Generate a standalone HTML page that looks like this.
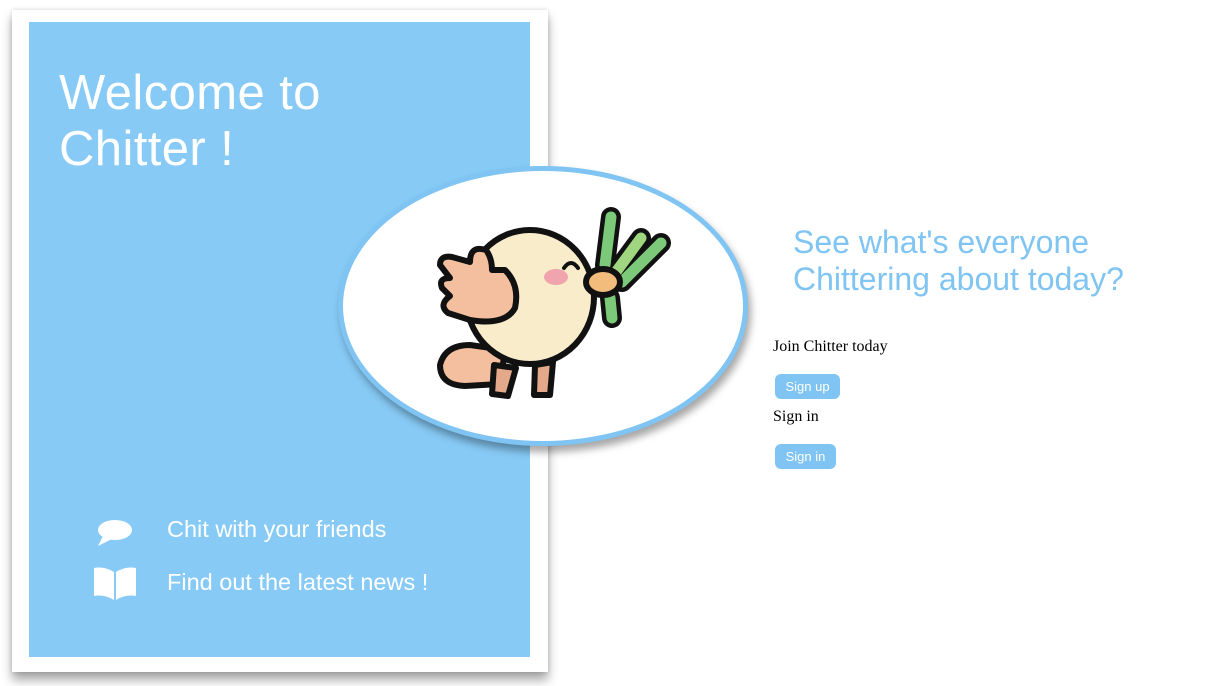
<!DOCTYPE html>
<html><head><style>
body{margin:0;width:1226px;height:686px;background:#fff;position:relative;overflow:hidden;font-family:"Liberation Serif",serif}
.frame{position:absolute;left:12px;top:10px;width:536px;height:662px;background:#fff;box-shadow:0 8px 10px rgba(0,0,0,.35),0 0 4px rgba(0,0,0,.15)}
.blue{position:absolute;left:29px;top:22px;width:501px;height:635px;background:#87caf6}
.h1{position:absolute;left:59px;top:65px;color:#fff;font:49px/56px "Liberation Sans",sans-serif;letter-spacing:.4px}
.feat{position:absolute;left:167px;color:#fff;font:23.5px "Liberation Sans",sans-serif}
.oval{position:absolute;left:338px;top:166px;width:400px;height:270px;border:5px solid #7fc4f2;border-radius:50%;background:#fff;box-shadow:3px 6px 8px rgba(0,0,0,.35)}
.tag{position:absolute;left:793px;top:224px;color:#7fc4f2;font:32px/37px "Liberation Sans",sans-serif}
.t{position:absolute;left:773px;font-size:16px;color:#000}
.btn{position:absolute;left:775px;height:25px;background:#7fc4f2;border-radius:6px;color:#fff;font:13px/25px "Liberation Sans",sans-serif;text-align:center}
</style></head><body>
<div class="frame"></div>
<div class="blue"></div>
<div class="h1">Welcome to<br>Chitter !</div>
<svg style="position:absolute;left:95px;top:518px" width="40" height="30" viewBox="0 0 40 30"><ellipse cx="20" cy="12" rx="17" ry="10" fill="#fff"/><path d="M8 18 L3 28 L17 21Z" fill="#fff"/></svg>
<div class="feat" style="top:516px">Chit with your friends</div>
<svg style="position:absolute;left:92px;top:566px" width="46" height="36" viewBox="0 0 46 36"><path d="M2 2 Q12 0 22 6 L22 34 Q12 28 2 30Z" fill="#fff"/><path d="M44 2 Q34 0 24 6 L24 34 Q34 28 44 30Z" fill="#fff"/></svg>
<div class="feat" style="top:569px">Find out the latest news !</div>
<div class="oval"></div>
<svg style="position:absolute;left:420px;top:200px" width="260" height="210" viewBox="420 200 260 210" stroke="#111" stroke-width="6" stroke-linejoin="round" stroke-linecap="round">
<path d="M470 345 Q445 345 440 365 Q440 385 465 386 L500 384 L505 350Z" fill="#f4bf9e"/>
<path d="M494 365 L492 394 L508 396 L516 368Z" fill="#e4a88a"/>
<path d="M535 365 L534 395 L550 395 L553 362Z" fill="#e4a88a"/>
<ellipse cx="530" cy="297" rx="64" ry="67" fill="#f8eccb"/>
<g stroke-width="20"><path d="M605 265 L611 217"/><path d="M616 272 L641 238"/><path d="M622 282 L661 243"/><path d="M610 298 L612 318"/></g>
<g stroke-width="11"><path d="M605 265 L611 217" stroke="#7cc97a"/><path d="M616 272 L641 238" stroke="#9fd67f"/><path d="M622 282 L661 243" stroke="#7cc97a"/><path d="M610 298 L612 318" stroke="#7cc97a"/></g>
<path d="M440 265 Q440 255 452 257 L470 262 Q470 245 486 250 Q492 258 492 270 L505 270 Q520 285 515 308 Q505 326 470 320 L448 313 Q438 305 450 296 L442 288 Q438 278 450 278Z" fill="#f4bf9e"/>
<ellipse cx="603" cy="282" rx="17" ry="13" fill="#f2bd7c"/>
<path d="M564 268 Q571 258 578 268" fill="none" stroke-width="4"/>
<ellipse cx="556" cy="277" rx="12" ry="8" fill="#f0a4ae" stroke="none"/>
</svg>
<div class="tag">See what's everyone<br>Chittering about today?</div>
<div class="t" style="top:338px">Join Chitter today</div>
<div class="btn" style="top:374px;width:65px">Sign up</div>
<div class="t" style="top:408px">Sign in</div>
<div class="btn" style="top:444px;width:61px">Sign in</div>
</body></html>
